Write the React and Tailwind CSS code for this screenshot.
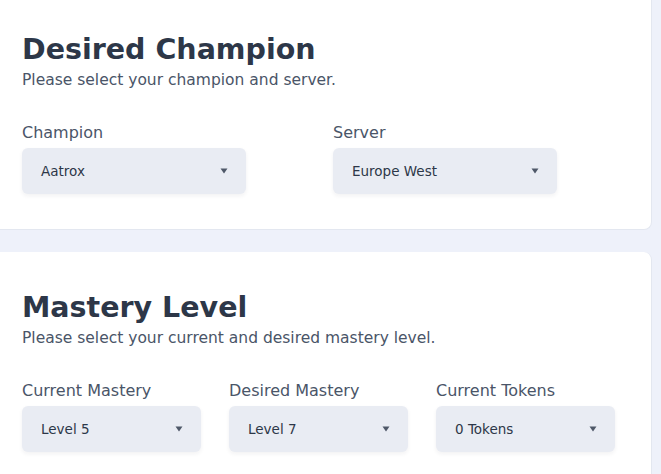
const Caret = () => (
  <svg width="8" height="6" viewBox="0 0 8 6" className="shrink-0">
    <path d="M0.5 0.5 L7.5 0.5 L4 5.5 Z" fill="#4f5868" />
  </svg>
)

const SelectField = ({ label, value, width }) => (
  <div className={`flex flex-col ${width}`}>
    <label className="text-[16px] leading-[22px] text-[#4a5568]">
      {label}
    </label>

    <div className="mt-[4px] flex h-[46px] items-center justify-between rounded-md bg-[#e9ecf3] pl-[19px] pr-[18px] shadow-[0_2px_4px_rgba(30,41,59,0.06)]">
      <span className="text-[13.5px] text-[#2d3748]">
        {value}
      </span>

      <Caret />
    </div>
  </div>
)

const Card = ({ title, subtitle, className, children }) => (
  <div
    className={`rounded-r-lg border-b border-r border-[#e3e7f0] bg-white pl-[22px] ${className}`}
  >
    <h2 className="text-[28.5px] font-bold leading-[36px] text-[#2d3748]">
      {title}
    </h2>

    <p className="mt-[1px] text-[15.5px] leading-[22px] text-[#4a5568]">
      {subtitle}
    </p>

    <div className="mt-[31px] flex">
      {children}
    </div>
  </div>
)

export default function App() {
  return (
    <div
      className="min-h-[474px] w-[661px] overflow-hidden bg-[#eef1fa] pr-[9px]"
      style={{ fontFamily: '"DejaVu Sans", "Noto Sans", sans-serif' }}
    >
      <Card
        title="Desired Champion"
        subtitle="Please select your champion and server."
        className="-mt-[10px] pt-[42px] pb-[35px]"
      >
        <div className="flex gap-[87px]">
          <SelectField label="Champion" value="Aatrox" width="w-[224px]" />
          <SelectField label="Server" value="Europe West" width="w-[224px]" />
        </div>
      </Card>

      <Card
        title="Mastery Level"
        subtitle="Please select your current and desired mastery level."
        className="mt-[22px] pt-[38px] pb-[40px]"
      >
        <div className="flex gap-[28px]">
          <SelectField label="Current Mastery" value="Level 5" width="w-[179px]" />
          <SelectField label="Desired Mastery" value="Level 7" width="w-[179px]" />
          <SelectField label="Current Tokens" value="0 Tokens" width="w-[179px]" />
        </div>
      </Card>
    </div>
  )
}
